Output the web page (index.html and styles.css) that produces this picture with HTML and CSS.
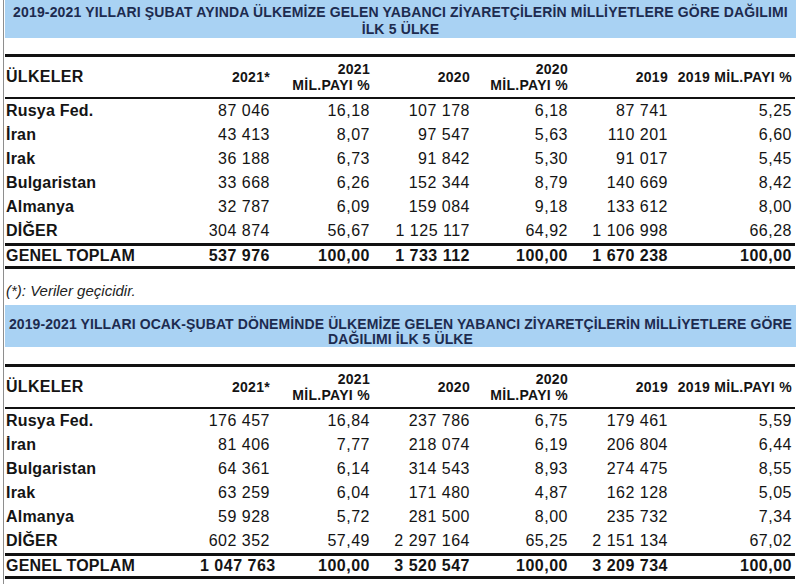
FILE: index.html
```html
<!DOCTYPE html>
<html lang="tr">
<head>
<meta charset="utf-8">
<title>Yabancı Ziyaretçiler</title>
<link rel="stylesheet" href="styles.css">
</head>
<body>
<div class="sheet">
  <section class="block block-one">
    <div class="banner banner-one">
      <span class="banner-line">2019-2021 YILLARI ŞUBAT AYINDA ÜLKEMİZE GELEN YABANCI ZİYARETÇİLERİN MİLLİYETLERE GÖRE DAĞILIMI</span>
      <span class="banner-line">İLK 5 ÜLKE</span>
    </div>
    <div class="gap"></div>
    <table class="grid">
      <colgroup>
        <col class="c-name"><col class="c-num"><col class="c-pct"><col class="c-num2"><col class="c-pct2"><col class="c-num3"><col class="c-pct3">
      </colgroup>
      <thead>
        <tr>
          <th class="name">ÜLKELER</th>
          <th>2021*</th>
          <th>2021<br>MİL.PAYI %</th>
          <th>2020</th>
          <th>2020<br>MİL.PAYI %</th>
          <th>2019</th>
          <th>2019 MİL.PAYI %</th>
        </tr>
      </thead>
      <tbody>
        <tr><td class="name">Rusya Fed.</td><td>87 046</td><td>16,18</td><td>107 178</td><td>6,18</td><td>87 741</td><td>5,25</td></tr>
        <tr><td class="name">İran</td><td>43 413</td><td>8,07</td><td>97 547</td><td>5,63</td><td>110 201</td><td>6,60</td></tr>
        <tr><td class="name">Irak</td><td>36 188</td><td>6,73</td><td>91 842</td><td>5,30</td><td>91 017</td><td>5,45</td></tr>
        <tr><td class="name">Bulgaristan</td><td>33 668</td><td>6,26</td><td>152 344</td><td>8,79</td><td>140 669</td><td>8,42</td></tr>
        <tr><td class="name">Almanya</td><td>32 787</td><td>6,09</td><td>159 084</td><td>9,18</td><td>133 612</td><td>8,00</td></tr>
        <tr><td class="name">DİĞER</td><td>304 874</td><td>56,67</td><td>1 125 117</td><td>64,92</td><td>1 106 998</td><td>66,28</td></tr>
      </tbody>
      <tfoot>
        <tr><td class="name">GENEL TOPLAM</td><td>537 976</td><td>100,00</td><td>1 733 112</td><td>100,00</td><td>1 670 238</td><td>100,00</td></tr>
      </tfoot>
    </table>
  </section>

  <p class="note">(*): Veriler geçicidir.</p>

  <section class="block block-two">
    <div class="banner banner-two">
      <span class="banner-line">2019-2021 YILLARI OCAK-ŞUBAT DÖNEMİNDE ÜLKEMİZE GELEN YABANCI ZİYARETÇİLERİN MİLLİYETLERE GÖRE</span>
      <span class="banner-line">DAĞILIMI İLK 5 ÜLKE</span>
    </div>
    <div class="gap"></div>
    <table class="grid">
      <colgroup>
        <col class="c-name"><col class="c-num"><col class="c-pct"><col class="c-num2"><col class="c-pct2"><col class="c-num3"><col class="c-pct3">
      </colgroup>
      <thead>
        <tr>
          <th class="name">ÜLKELER</th>
          <th>2021*</th>
          <th>2021<br>MİL.PAYI %</th>
          <th>2020</th>
          <th>2020<br>MİL.PAYI %</th>
          <th>2019</th>
          <th>2019 MİL.PAYI %</th>
        </tr>
      </thead>
      <tbody>
        <tr><td class="name">Rusya Fed.</td><td>176 457</td><td>16,84</td><td>237 786</td><td>6,75</td><td>179 461</td><td>5,59</td></tr>
        <tr><td class="name">İran</td><td>81 406</td><td>7,77</td><td>218 074</td><td>6,19</td><td>206 804</td><td>6,44</td></tr>
        <tr><td class="name">Bulgaristan</td><td>64 361</td><td>6,14</td><td>314 543</td><td>8,93</td><td>274 475</td><td>8,55</td></tr>
        <tr><td class="name">Irak</td><td>63 259</td><td>6,04</td><td>171 480</td><td>4,87</td><td>162 128</td><td>5,05</td></tr>
        <tr><td class="name">Almanya</td><td>59 928</td><td>5,72</td><td>281 500</td><td>8,00</td><td>235 732</td><td>7,34</td></tr>
        <tr><td class="name">DİĞER</td><td>602 352</td><td>57,49</td><td>2 297 164</td><td>65,25</td><td>2 151 134</td><td>67,02</td></tr>
      </tbody>
      <tfoot>
        <tr><td class="name">GENEL TOPLAM</td><td>1 047 763</td><td>100,00</td><td>3 520 547</td><td>100,00</td><td>3 209 734</td><td>100,00</td></tr>
      </tfoot>
    </table>
  </section>
</div>
</body>
</html>
```

FILE: styles.css
```css
html, body {
  margin: 0;
  padding: 0;
  background: #ffffff;
}

body {
  font-family: "Liberation Sans", Arial, sans-serif;
  color: #141414;
  width: 800px;
  height: 584px;
  overflow: hidden;
}

.sheet {
  margin-left: 3px;
  border-left: 1px solid #8e8e8e;
  padding-left: 1px;
  width: 791px;
  height: 584px;
}

.banner {
  background: #a9d2f3;
  color: #1d2b4f;
  font-weight: bold;
  font-size: 14px;
  text-align: center;
  display: flex;
  flex-direction: column;
  align-items: center;
}

.banner-line {
  display: block;
  line-height: 17px;
  white-space: nowrap;
}

.banner-one {
  height: 38px;
  padding-top: 4px;
  box-sizing: border-box;
  letter-spacing: 0.15px;
}

.banner-two {
  height: 42px;
  padding-top: 12px;
  box-sizing: border-box;
  letter-spacing: 0.1px;
}

.banner-two .banner-line {
  line-height: 15px;
}

.gap {
  height: 16px;
}

.block-two .gap {
  height: 17px;
}

.grid {
  width: 790px;
  border-collapse: collapse;
  table-layout: fixed;
}

.c-name { width: 195px; }
.c-num { width: 73px; }
.c-pct { width: 100px; }
.c-num2 { width: 100px; }
.c-pct2 { width: 98px; }
.c-num3 { width: 100px; }
.c-pct3 { width: 124px; }

.grid th,
.grid td {
  padding: 0 3px 0 0;
  text-align: right;
  white-space: nowrap;
}

.grid .name {
  text-align: left;
  padding-left: 1px;
}

.grid thead tr {
  border-top: 3px solid #111;
  border-bottom: 2px solid #111;
}

.grid th {
  height: 40px;
  font-size: 14px;
  line-height: 16px;
  font-weight: bold;
  vertical-align: middle;
  letter-spacing: 0.3px;
}

.grid th.name {
  font-size: 16px;
}

.grid td {
  height: 24px;
  font-size: 16px;
  line-height: 24px;
  letter-spacing: 0.5px;
}

.grid td.name {
  font-weight: bold;
  letter-spacing: 0.2px;
}

.grid tfoot tr {
  border-top: 3px solid #111;
  border-bottom: 3px solid #111;
}

.grid tfoot td {
  height: 20px;
  line-height: 20px;
  font-weight: bold;
}

.note {
  margin: 0;
  height: 36px;
  line-height: 44px;
  font-style: italic;
  font-size: 15px;
  color: #222;
  padding-left: 1px;
}
```
